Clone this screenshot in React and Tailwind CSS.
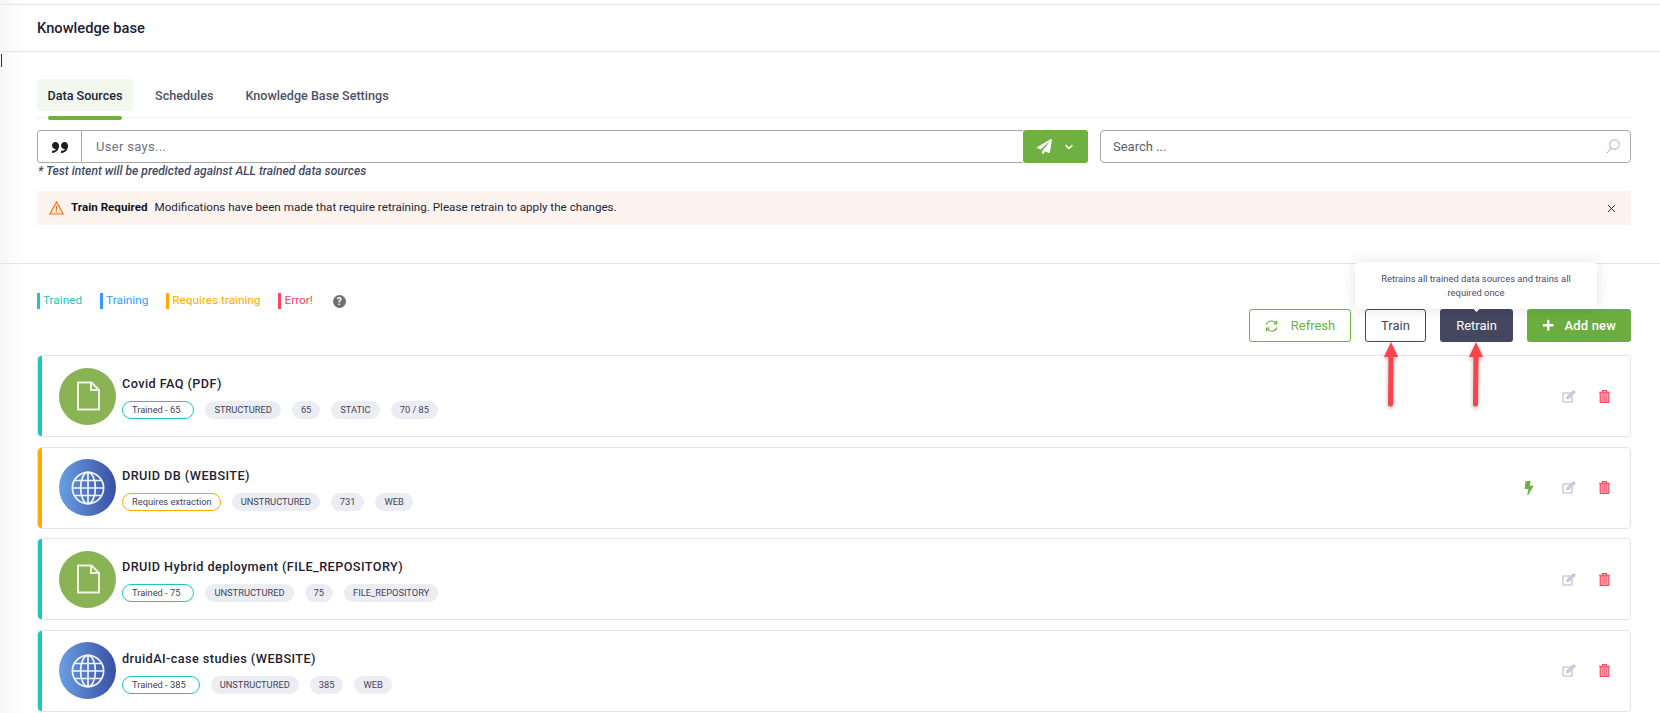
import { FaBolt, FaPaperPlane, FaPlus } from 'react-icons/fa'
import { ImQuotesRight } from 'react-icons/im'
import { ChevronDown, X } from 'lucide-react'

const TEAL = 'bg-[#1cc6bb]'
const ORANGE = 'bg-[#ffaa00]'

const cards = [
  {
    title: 'Covid FAQ (PDF)',
    kind: 'file',
    bar: TEAL,
    status: { label: 'Trained - 65', style: 'border-[#1cc6bb] pr-[13px]' },
    tags: ['STRUCTURED', '65', 'STATIC', '70 / 85'],
  },
  {
    title: 'DRUID DB (WEBSITE)',
    kind: 'web',
    bar: ORANGE,
    bolt: true,
    status: { label: 'Requires extraction', style: 'border-[#ffaa00] pr-[8px]' },
    tags: ['UNSTRUCTURED', '731', 'WEB'],
  },
  {
    title: 'DRUID Hybrid deployment (FILE_REPOSITORY)',
    kind: 'file',
    bar: TEAL,
    status: { label: 'Trained - 75', style: 'border-[#1cc6bb] pr-[13px]' },
    tags: ['UNSTRUCTURED', '75', 'FILE_REPOSITORY'],
  },
  {
    title: 'druidAI-case studies (WEBSITE)',
    kind: 'web',
    bar: TEAL,
    status: { label: 'Trained - 385', style: 'border-[#1cc6bb] pr-[13px]' },
    tags: ['UNSTRUCTURED', '385', 'WEB'],
  },
]

const legend = [
  { label: 'Trained', bar: 'bg-[#1cc6bb]', text: 'text-[#1cc6bb]' },
  { label: 'Training', bar: 'bg-[#339dff]', text: 'text-[#339dff]' },
  { label: 'Requires training', bar: 'bg-[#ffaa00]', text: 'text-[#ffaa00]' },
  { label: 'Error!', bar: 'bg-[#f9475e]', text: 'text-[#f9475e]' },
]

function FileIcon() {
  return (
    <svg width="24" height="30" viewBox="0 0 24 30" fill="none" stroke="#eef3e4" strokeWidth="2">
      <path d="M2 1.5h13.5L23 9v19.5H2z" />
      <path d="M15 1.5V9h8" />
    </svg>
  )
}

function GlobeIcon() {
  return (
    <svg width="34" height="34" viewBox="0 0 34 34" fill="none" stroke="#f2f5fb" strokeWidth="1.7">
      <circle cx="17" cy="17" r="15.6" />
      <ellipse cx="17" cy="17" rx="7.4" ry="15.6" />
      <path d="M17 1.4v31.2M1.4 17h31.2M3.6 9.5h26.8M3.6 24.5h26.8" />
    </svg>
  )
}

function EditIcon() {
  return (
    <svg width="14" height="13" viewBox="0 0 14 13" fill="none" stroke="#b9b8cc" strokeWidth="1.1">
      <path d="M9.5 3H1v9h9V6" />
      <path d="M5 8.5l.5-2L11.5 1 13 2.3 7 8z" fill="#e4e3ee" />
    </svg>
  )
}

function TrashIcon() {
  return (
    <svg width="11" height="13" viewBox="0 0 11 13" fill="none">
      <path d="M1.2 3h8.6v9.4H1.2z" fill="#fba6b8" stroke="#f5475f" strokeWidth="1.1" />
      <path d="M0 2.2h11M3.5 2V.6h4V2" stroke="#f5475f" strokeWidth="1.1" />
      <path d="M3.7 4.5v6.5M5.5 4.5v6.5M7.3 4.5v6.5" stroke="#f5475f" strokeWidth=".6" />
    </svg>
  )
}

function SearchIcon() {
  return (
    <svg width="14" height="15" viewBox="0 0 14 15" fill="none" stroke="#a9a9b4" strokeWidth="1">
      <circle cx="8.5" cy="5.5" r="4.8" />
      <path d="M5 9L1 14" />
    </svg>
  )
}

function WarnIcon() {
  return (
    <svg width="15" height="14" viewBox="0 0 15 14" fill="none">
      <path d="M7.5 1L14.2 13H.8z" stroke="#f2711c" strokeWidth="1.2" fill="#fde9d8" />
      <path d="M7.5 5v4.2M7.5 10.2v1.3" stroke="#f2711c" strokeWidth="1.2" />
    </svg>
  )
}

function SyncIcon() {
  return (
    <svg width="13" height="12" viewBox="0 0 13 12" fill="none" stroke="#6fb043" strokeWidth="1.2">
      <path d="M1 4.5C2 2 4 1 6.5 1c2 0 3.5.8 4.5 2.2" />
      <path d="M11.6.8v3h-3" />
      <path d="M12 7.5C11 10 9 11 6.5 11c-2 0-3.5-.8-4.5-2.2" />
      <path d="M1.4 11.2v-3h3" />
    </svg>
  )
}

function UpArrow({ className }) {
  return (
    <svg
      className={className}
      width="18"
      height="66"
      viewBox="0 0 18 66"
      style={{ filter: 'drop-shadow(0 2px 2px rgba(0,0,0,0.3))' }}
    >
      <path d="M9 0L16 15H11.5L11 62a2.5 2.5 0 0 1-5 0L6.5 15H2z" fill="#f9444a" />
    </svg>
  )
}

function Card({ card }) {
  return (
    <div className="flex h-[82px] items-center overflow-hidden rounded-[4px] border border-[#e2e3ee] bg-white">
      <div className={`h-full w-[4px] shrink-0 rounded-l-[3px] ${card.bar}`} />
      <div
        className={
          card.kind === 'file'
            ? 'ml-[17px] flex h-[57px] w-[57px] shrink-0 items-center justify-center rounded-full bg-[#89b354]'
            : 'ml-[17px] flex h-[57px] w-[57px] shrink-0 items-center justify-center rounded-full bg-gradient-to-r from-[#6b9fe2] to-[#3a50a4]'
        }
      >
        {card.kind === 'file' ? <FileIcon /> : <GlobeIcon />}
      </div>
      <div className="ml-[6px] flex-1 pt-[2px]">
        <div className="text-[12.7px] leading-[18px] font-medium tracking-[0.42px] text-[#1f2333]">{card.title}</div>
        <div className="mt-[8px] flex items-center gap-[11px]">
          <span
            className={`flex h-[18px] items-center rounded-full border bg-white pl-[9px] text-[9.3px] text-[#3f4459] ${card.status.style}`}
          >
            {card.status.label}
          </span>
          {card.tags.map((tag) => (
            <span
              key={tag}
              className="flex h-[18px] items-center rounded-full bg-[#ecedf3] px-[9px] text-[9.3px] text-[#3f4459]"
            >
              {tag}
            </span>
          ))}
        </div>
      </div>
      <div className="flex items-center gap-[23px] pr-[20px]">
        {card.bolt && <FaBolt className="mr-[3px] text-[14px] text-[#6fb043]" />}
        <EditIcon />
        <TrashIcon />
      </div>
    </div>
  )
}

export default function App() {
  return (
    <div className="relative h-[713px] w-full overflow-hidden bg-white font-['Roboto',sans-serif]">
      <div className="absolute top-0 left-0 h-full w-[26px] bg-gradient-to-r from-[#f7f7f8] to-white" />
      <div className="absolute top-[54px] left-[1px] h-[13px] w-px bg-[#333]" />

      <header className="relative mt-[4px] flex h-[48px] items-center border-y border-[#e3e5ee] pt-[1px] pl-[37px]">
        <h1 className="text-[14.7px] font-medium text-[#1d2136]">Knowledge base</h1>
      </header>

      <section className="relative h-[212px] border-b border-[#e3e5ee] pt-[27px] pr-[29px] pl-[37px]">
        <nav className="relative flex h-[39px] items-start border-b border-[#f0f0f3] text-[12.6px] font-medium text-[#4d5268]">
          <a className="flex h-[32px] w-[96px] items-center justify-center rounded-[3px] bg-[#f2f8ee] pt-[2px] text-[#20243a]">
            Data Sources
          </a>
          <a className="ml-[22px] flex h-[32px] items-center pt-[2px]">Schedules</a>
          <a className="ml-[32px] flex h-[32px] items-center pt-[2px]">Knowledge Base Settings</a>
          <span className="absolute top-[37px] left-[11px] h-[4px] w-[74px] rounded-full bg-[#6fb043]" />
        </nav>

        <div className="mt-[12px] flex gap-[12px]">
          <div className="flex h-[33px] flex-1">
            <div className="flex w-[45px] items-center justify-center rounded-l-[3px] border border-[#a9a9a9] text-[16px] text-[#1d1d24]">
              <ImQuotesRight />
            </div>
            <input
              placeholder="User says..."
              className="flex-1 border-y border-[#a9a9a9] px-[14px] text-[13px] tracking-[0.3px] outline-none placeholder:text-[#70727f]"
            />
            <button className="flex w-[65px] items-center justify-center gap-[11px] rounded-[3px] bg-[#6fb043] text-white">
              <FaPaperPlane className="text-[15px]" />
              <ChevronDown size={12} strokeWidth={3} />
            </button>
          </div>
          <div className="relative flex h-[33px] w-[531px] items-center rounded-[4px] border border-[#a9a9a9]">
            <input
              placeholder="Search ..."
              className="flex-1 px-[12px] text-[13px] outline-none placeholder:text-[#5c5e6b]"
            />
            <span className="pr-[10px]">
              <SearchIcon />
            </span>
          </div>
        </div>

        <p className="pl-[1px] text-[12.1px] leading-[16px] font-medium text-[#444a60] italic">
          * Test intent will be predicted against ALL trained data sources
        </p>

        <div className="mt-[12px] flex h-[34px] items-center rounded-[3px] bg-[#fdf3ee] pr-[13px] pl-[12px] text-[11.65px] text-[#23263a]">
          <WarnIcon />
          <span className="ml-[7px] font-bold text-[#14161f]">Train Required</span>
          <span className="ml-[7px] flex-1">
            Modifications have been made that require retraining. Please retrain to apply the changes.
          </span>
          <X size={13} strokeWidth={1.7} className="text-[#222]" />
        </div>
      </section>

      <section className="relative pt-[29px] pr-[29px] pl-[37px]">
        <div className="flex h-[16px] items-center gap-[18px] text-[11.8px]">
          {legend.map((item) => (
            <span key={item.label} className={`flex items-center gap-[3px] ${item.text}`}>
              <i className={`h-[16px] w-[3px] ${item.bar}`} />
              {item.label}
            </span>
          ))}
          <span className="ml-[2px] flex h-[13px] w-[13px] items-center justify-center rounded-full bg-[#6f6f6f] text-[10px] font-bold text-white">
            ?
          </span>
        </div>

        <div className="flex h-[33px] justify-end gap-[14px] text-[13px]">
          <button className="flex w-[102px] items-center justify-center gap-[13px] rounded-[3px] border border-[#6fb043] text-[#6fb043]">
            <SyncIcon />
            Refresh
          </button>
          <button className="w-[61px] rounded-[3px] border border-[#43475f] text-[#43475f]">Train</button>
          <button className="w-[73px] rounded-[3px] bg-[#43475f] text-white">Retrain</button>
          <button className="flex w-[104px] items-center justify-center gap-[10px] rounded-[3px] bg-[#6cad3f] font-medium tracking-[0.2px] text-white">
            <FaPlus className="text-[12.5px]" />
            Add new
          </button>
        </div>

        <div className="mt-[13px] flex flex-col gap-[9.5px]">
          {cards.map((card) => (
            <Card key={card.title} card={card} />
          ))}
        </div>
      </section>

      <div className="absolute top-[262px] left-[1355px] flex h-[47px] w-[242px] items-center justify-center rounded-[3px] bg-white px-[12px] text-center text-[9.4px] leading-[14px] text-[#4a4e66] shadow-[0_0_14px_rgba(0,0,0,0.12)]">
        Retrains all trained data sources and trains all required once
        <span className="absolute -bottom-[2px] left-[119px] h-[5px] w-[5px] rotate-45 bg-white" />
      </div>

      <UpArrow className="absolute top-[342px] left-[1382px]" />
      <UpArrow className="absolute top-[342px] left-[1467px]" />
    </div>
  )
}
